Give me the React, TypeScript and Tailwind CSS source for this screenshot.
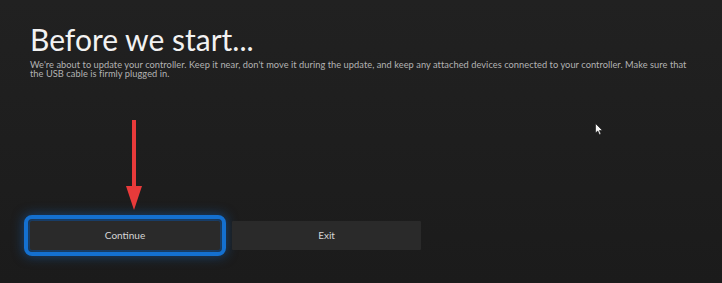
import React from "react";

export default function App() {
  return (
    <div
      className="relative w-[722px] h-[283px] overflow-hidden bg-gradient-to-b from-[#212121] to-[#1b1b1b] text-white"
      style={{ fontFamily: 'Lato, "Noto Sans", sans-serif' }}
    >
      <div className="flex flex-col h-full pl-[30px] pr-[30px] pt-[21px]">
        <h1 className="text-[30px] leading-[36px] font-normal text-[#f2f2f2]">
          Before we start...
        </h1>
        <p className="mt-[3px] text-[9.25px] leading-[9px] text-[#b3b3b3] max-w-[664px] tracking-[0.05px]">
          We're about to update your controller. Keep it near, don't move it during the update, and keep any attached devices connected to your controller. Make sure that the USB cable is firmly plugged in.
        </p>
        <div className="flex gap-[12px] mt-auto mb-[33px]">
          <button className="w-[190px] h-[29px] bg-[#2a2a2a] rounded-[2px] text-[10px] text-[#d6d6d6] outline outline-[4px] outline-offset-[2px] outline-[#1470d0] shadow-[0_0_12px_6px_rgba(19,110,210,0.5)]">
            Continue
          </button>
          <button className="w-[189px] h-[29px] bg-[#2a2a2a] rounded-[1px] text-[10px] text-[#d6d6d6]">
            Exit
          </button>
        </div>
      </div>
      <svg className="absolute left-[124px] top-[119px]" width="20" height="93" viewBox="0 0 20 93">
        <rect x="8" y="1" width="4" height="70" fill="#e83a3a" />
        <polygon points="2,67 18,67 10,91" fill="#e83a3a" />
      </svg>
      <svg className="absolute left-[595px] top-[123px]" width="10" height="14" viewBox="0 0 10 14">
        <path d="M0.5 0.5 L0.5 10 L2.8 8 L4.4 11.8 L6 11.1 L4.4 7.5 L7.5 7.5 Z" fill="#f5f5f5" stroke="#111" strokeWidth="0.6" />
      </svg>
    </div>
  );
}
